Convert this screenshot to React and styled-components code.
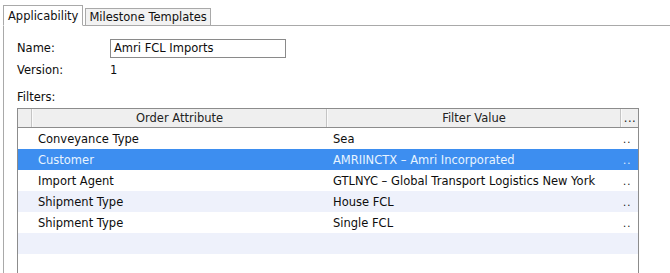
import React from 'react'
import styled, { createGlobalStyle } from 'styled-components'

const GlobalStyle = createGlobalStyle`
  html, body {
    margin: 0;
    padding: 0;
    background: #ffffff;
  }
  body {
    font-family: "DejaVu Sans", "Liberation Sans", sans-serif;
    font-size: 11.5px;
    color: #0d0d0d;
  }
`

const rows = [
  { attr: 'Conveyance Type', value: 'Sea' },
  { attr: 'Customer', value: 'AMRIINCTX – Amri Incorporated', selected: true },
  { attr: 'Import Agent', value: 'GTLNYC – Global Transport Logistics New York' },
  { attr: 'Shipment Type', value: 'House FCL' },
  { attr: 'Shipment Type', value: 'Single FCL' },
  { attr: '', value: '', empty: true },
]

const Window = styled.div`
  width: 670px;
  height: 273px;
  padding: 5px 0 0 3px;
  box-sizing: border-box;
  overflow: hidden;
`

const TabBar = styled.div`
  display: flex;
  align-items: flex-end;
  height: 20px;
  border-bottom: 1px solid #a9a9a9;
`

const Tab = styled.div`
  height: ${p => (p.active ? '21px' : '17px')};
  padding: 0 ${p => (p.active ? '4px' : '3px')};
  margin-left: ${p => (p.active ? '0' : '2px')};
  border: 1px solid #a9a9a9;
  border-bottom: ${p => (p.active ? '1px solid #ffffff' : 'none')};
  margin-bottom: ${p => (p.active ? '-1px' : '0')};
  background: ${p => (p.active ? '#ffffff' : '#f2f2f2')};
  box-sizing: border-box;
  display: flex;
  align-items: center;
  color: #111;
`

const Panel = styled.div`
  border-left: 1px solid #a9a9a9;
  height: 260px;
  padding: 11px 0 0 13px;
  box-sizing: border-box;
`

const Form = styled.div`
  display: grid;
  grid-template-columns: 93px 176px;
  align-items: center;
`

const Label = styled.div`
  height: ${p => p.h || 22}px;
  display: flex;
  align-items: ${p => (p.bottom ? 'flex-end' : 'center')};
  padding-bottom: ${p => (p.bottom ? '4px' : '0')};
  box-sizing: border-box;
`

const Input = styled.div`
  height: 19px;
  border: 1px solid #8a8a8a;
  box-sizing: border-box;
  padding-left: 3px;
  display: flex;
  align-items: center;
`

const Table = styled.div`
  width: 622px;
  height: 170px;
  border: 1px solid #8c8c8c;
  border-bottom: none;
  box-sizing: border-box;
`

const Header = styled.div`
  display: grid;
  grid-template-columns: 14px 295px 294px 17px;
  height: 18px;
  border-bottom: 1px solid #8c8c8c;
  background: #efefef;
`

const HeadCell = styled.div`
  border-right: ${p => (p.last ? 'none' : '1px solid #c4c4c4')};
  border-left: ${p => (p.first ? 'none' : '1px solid #fafafa')};
  display: flex;
  align-items: center;
  justify-content: center;
  color: #222;
  letter-spacing: ${p => (p.last ? '0.5px' : '0')};
`

const Row = styled.div`
  display: grid;
  grid-template-columns: 20px 295px 288px 17px;
  height: 21px;
  align-items: center;
  background: ${p => (p.selected ? '#3d8ef0' : p.alt ? '#eef1fb' : '#ffffff')};
  color: ${p => (p.selected ? '#e8f4ff' : '#0d0d0d')};
`

const Cell = styled.div`
  white-space: nowrap;
  overflow: hidden;
`

const Dots = styled.div`
  font-size: 10px;
  letter-spacing: 1px;
  padding-left: 2px;
  padding-top: 2px;
`

export default function App() {
  return (
    <Window>
      <GlobalStyle />
      <TabBar>
        <Tab active>Applicability</Tab>
        <Tab>Milestone Templates</Tab>
      </TabBar>
      <Panel>
        <Form>
          <Label h={22}>Name:</Label>
          <Input>Amri FCL Imports</Input>
          <Label h={22}>Version:</Label>
          <Label h={22}>1</Label>
          <Label h={27} bottom>Filters:</Label>
          <div />
        </Form>
        <Table>
          <Header>
            <HeadCell first />
            <HeadCell>Order Attribute</HeadCell>
            <HeadCell>Filter Value</HeadCell>
            <HeadCell last>...</HeadCell>
          </Header>
          {rows.map((r, i) => (
            <Row key={i} selected={r.selected} alt={i % 2 === 1}>
              <Cell />
              <Cell>{r.attr}</Cell>
              <Cell>{r.value}</Cell>
              <Dots>{r.empty ? '' : '..'}</Dots>
            </Row>
          ))}
        </Table>
      </Panel>
    </Window>
  )
}
